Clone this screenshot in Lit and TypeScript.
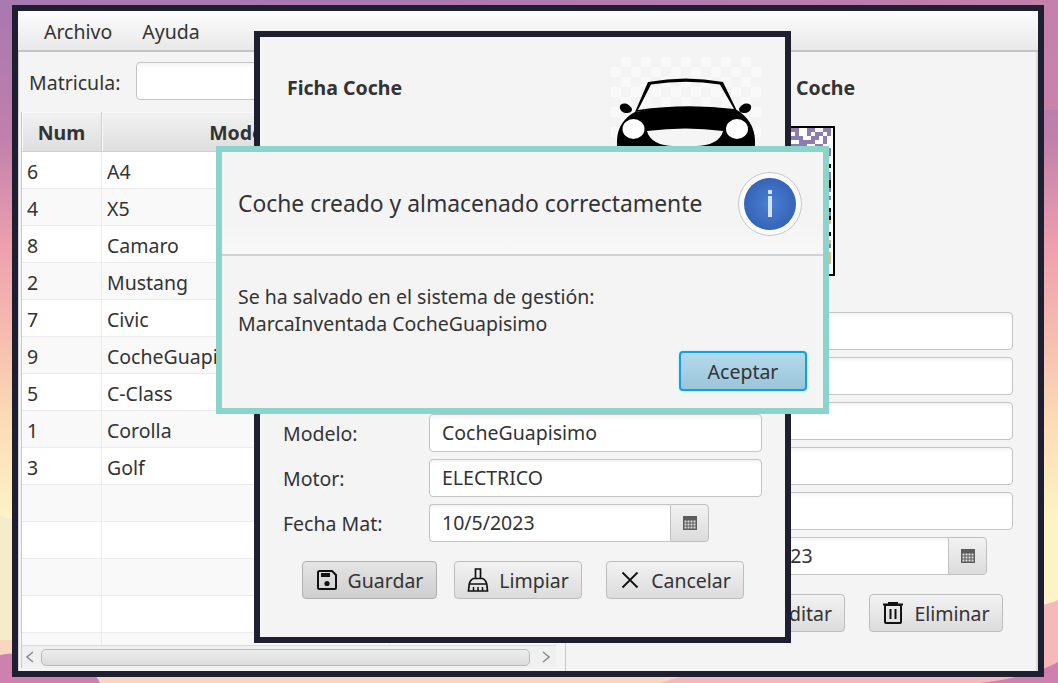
import { LitElement, html, css, svg } from 'lit';
import { customElement } from 'lit/decorators.js';

const coches = [
  ['6', 'A4'], ['4', 'X5'], ['8', 'Camaro'], ['2', 'Mustang'], ['7', 'Civic'],
  ['9', 'CocheGuapisimo'], ['5', 'C-Class'], ['1', 'Corolla'], ['3', 'Golf'],
  ['', ''], ['', ''], ['', ''], ['', ''], ['', ''],
];

// pixels of the qr code, always the same ones
function qrCells() {
  const cells = [];
  let seed = 71;
  for (let y = 0; y < 36; y++) {
    for (let x = 0; x < 36; x++) {
      seed = (seed * 1103515245 + 12345) & 0x7fffffff;
      const r = (seed >> 8) % 100;
      const edge = x > 33 || y < 6;
      let fill = '';
      if (y < 6) fill = r < 48 ? '#8d7cae' : '';
      else if (edge) fill = r < 25 ? '#8d7cae' : r < 45 ? '#000' : r < 60 ? '#f5b27c' : '';
      else fill = r < 50 ? '#8d7cae' : '';
      if (fill) cells.push(svg`<rect x=${x * 4} y=${y * 4} width="4" height="4" fill=${fill}></rect>`);
    }
  }
  return cells;
}

const iconGuardar = html`<svg class="ico" viewBox="0 0 22 22"><path d="M3.500 2h12.500l4 4v12.500a1.500 1.500 0 0 1-1.500 1.500h-15a1.500 1.500 0 0 1-1.500-1.500v-15a1.500 1.500 0 0 1 1.500-1.500z" fill="none" stroke="#111" stroke-width="2"/><rect x="5" y="4" width="9" height="4" fill="#111"/><circle cx="11" cy="14.500" r="2.600" fill="#111"/></svg>`;
const iconLimpiar = html`<svg class="ico tall" viewBox="0 0 22 24"><path d="M8.500 1h5v9.500h-5zM6.500 10.500h9c2.500 1 3.800 3 4.300 6l.7 6.500H1.500l.7-6.500c.5-3 1.800-5 4.300-6zM2.500 16h17" fill="none" stroke="#111" stroke-width="1.700"/><path d="M6.500 19v4M11 19v4M15.500 19v4" stroke="#111" stroke-width="1.500"/></svg>`;
const iconCancelar = html`<svg class="ico" viewBox="0 0 22 22"><path d="M3.500 3.500l15 15M18.500 3.500l-15 15" stroke="#111" stroke-width="1.800" fill="none"/></svg>`;
const iconEditar = html`<svg class="ico" viewBox="0 0 22 22"><path d="M3 15l11-11 4 4-11 11H3z" fill="none" stroke="#111" stroke-width="1.800"/></svg>`;
const iconEliminar = html`<svg class="ico" viewBox="0 0 22 22"><path d="M1 2.500h20M7 2.500V1h8v1.500" fill="none" stroke="#111" stroke-width="2"/><rect x="3" y="3" width="16" height="18" rx="1" fill="none" stroke="#111" stroke-width="2"/><path d="M8.500 7v10M13.500 7v10" stroke="#111" stroke-width="2"/></svg>`;
const iconCalendario = html`<svg class="cal" viewBox="0 0 14 14"><rect width="14" height="14" fill="#5c5c5c"/><path d="M1.500 4.500h2v2h-2zM4.500 4.500h2v2h-2zM7.500 4.500h2v2h-2zM10.500 4.500h2v2h-2zM1.500 7.500h2v2h-2zM4.500 7.500h2v2h-2zM7.500 7.500h2v2h-2zM10.500 7.500h2v2h-2zM1.500 10.500h2v2h-2zM4.500 10.500h2v2h-2zM7.500 10.500h2v2h-2zM10.500 10.500h2v2h-2z" fill="#dcdcdc"/></svg>`;

@customElement('app-root')
export class AppRoot extends LitElement {
  static styles = css`
    :host {
      display: block;
      font-family: 'Noto Sans', 'Open Sans', sans-serif;
      font-size: 19.5px;
      color: #333;
    }

    .desktop {
      position: relative;
      width: 1058px;
      height: 683px;
      overflow: hidden;
    }

    .wallpaper {
      position: absolute;
      left: 0;
      top: 0;
    }

    .win {
      position: absolute;
      box-sizing: border-box;
      background: #f4f4f4;
      border: 6px solid #1e2032;
    }

    .main { left: 12px; top: 5px; width: 1032px; height: 672px; }
    .form { left: 254px; top: 31px; width: 537px; height: 612px; }
    .dialog { left: 216px; top: 146px; width: 613px; height: 268px; border-color: #8bd4c9; }

    .menu {
      box-sizing: border-box;
      display: flex;
      gap: 30px;
      height: 41px;
      padding: 7px 0 0 26px;
      line-height: 27px;
      background: linear-gradient(#fdfdfd, #e8e8e8);
      border-bottom: 2px solid #c4c4c4;
    }

    .split {
      display: flex;
      height: 619px;
    }

    .left {
      box-sizing: border-box;
      width: 548px;
      padding: 10px 9px 0 2px;
      border-left: 1px solid #d4d4d4;
      border-right: 1px solid #c8c8c8;
    }

    .search {
      display: flex;
      align-items: center;
      gap: 16px;
      padding-left: 8px;
      margin-bottom: 12px;
    }

    .search-label { padding-top: 3px; }

    .input {
      box-sizing: border-box;
      height: 38px;
      padding: 0 12px;
      line-height: 36px;
      background: linear-gradient(#f4f4f4, #fff 5px);
      border: 1px solid #c4c4c4;
      border-radius: 4px;
    }

    .search .input { width: 340px; }

    .table {
      box-sizing: border-box;
      height: 556px;
      overflow: hidden;
      position: relative;
      background: #fff;
      border-left: 1px solid #c8c8c8;
    }

    .thead {
      display: grid;
      grid-template-columns: 80px 288px 1fr;
      grid-template-rows: 40px;
      height: 40px;
      font-weight: 700;
      text-align: center;
      line-height: 42px;
    }

    .thead span {
      box-sizing: border-box;
      height: 40px;
      background: linear-gradient(#f2f2f2, #dedede);
      border-right: 1px solid #cfcfcf;
      border-bottom: 1px solid #cfcfcf;
      box-shadow: inset 1px 1px 0 #fafafa;
    }

    .row {
      box-sizing: border-box;
      display: grid;
      grid-template-columns: 80px 288px 1fr;
      grid-template-rows: 36px;
      height: 37px;
      line-height: 40px;
      white-space: nowrap;
      border-bottom: 1px solid #ececec;
    }

    .row:nth-child(even) { background: #f9f9f9; }

    .row span {
      height: 36px;
      padding-left: 5px;
      border-right: 1px solid #ececec;
    }

    .scrollbar {
      position: absolute;
      left: 0;
      right: 0;
      bottom: 0;
      box-sizing: border-box;
      height: 23px;
      display: flex;
      align-items: center;
      background: #f0f0f0;
      border-top: 1px solid #dadada;
    }

    .scrollbar svg { width: 8px; height: 12px; flex: none; }
    .arrow-left { margin: 0 7px 0 4px; }
    .arrow-right { margin-left: 12px; }

    .thumb {
      box-sizing: border-box;
      width: 489px;
      height: 17px;
      background: linear-gradient(#ededed, #dcdcdc);
      border: 1px solid #b8b8b8;
      border-radius: 5px;
    }

    .right {
      flex: 1;
      box-sizing: border-box;
      padding: 24px 0 0 15px;
      border-right: 2px solid #dcdcdc;
    }

    .title {
      font-weight: 700;
      line-height: 24px;
    }

    .right .title { margin-left: 159px; }

    .qr {
      display: block;
      margin: 26px 0 36px 104px;
      border: 2px solid #000;
      background: #fff;
    }

    .field {
      display: flex;
      align-items: center;
      margin-bottom: 7px;
    }

    .label { flex: none; }
    .right .label { width: 126px; }
    .form .label { width: 146px; }
    .right .field .input { width: 306px; }
    .form .field .input { width: 333px; }

    .field .input.date {
      border-radius: 4px 0 0 4px;
      border-right: none;
    }

    .right .field .input.date { width: 241px; }
    .form .field .input.date { width: 241px; }

    .calbtn {
      box-sizing: border-box;
      width: 39px;
      height: 38px;
      display: flex;
      align-items: center;
      justify-content: center;
      background: linear-gradient(#f2f2f2, #dcdcdc);
      border: 1px solid #c0c0c0;
      border-radius: 0 4px 4px 0;
    }

    .cal { width: 14px; height: 14px; }

    .actions {
      display: flex;
      margin-top: 19px;
    }

    .right .actions { justify-content: flex-end; gap: 24px; margin-right: 33px; }
    .form .actions { margin-left: 19px; }

    .btn {
      box-sizing: border-box;
      display: flex;
      align-items: center;
      justify-content: center;
      gap: 10px;
      height: 38px;
      background: linear-gradient(#f2f2f2, #dcdcdc);
      border: 1px solid #bdbdbd;
      border-radius: 4px;
    }

    .btn.default { background: linear-gradient(#e4e4e4, #cfcfcf); border-color: #b0b0b0; }

    .ico { width: 22px; height: 22px; flex: none; }
    .ico.tall { height: 24px; }

    .w-guardar { width: 135px; }
    .w-limpiar { width: 128px; margin-left: 17px; }
    .w-cancelar { width: 138px; margin-left: 24px; }
    .w-editar { width: 165px; justify-content: flex-end; padding-right: 12px; }
    .w-eliminar { width: 134px; }

    .form-body { padding: 20px 23px 0; }

    .form-head {
      display: flex;
      justify-content: space-between;
      width: 478px;
      margin-bottom: 72px;
    }

    .form-head .title { margin: 19px 0 0 4px; }
    .car { display: block; }

    .dlg-head {
      box-sizing: border-box;
      display: flex;
      align-items: center;
      justify-content: space-between;
      height: 104px;
      padding: 2px 21px 0 16px;
      background: linear-gradient(#f4f4f4 70%, #f8f8f8);
      border-bottom: 2px solid #d2d2d2;
    }

    .dlg-title { font-size: 22.85px; padding-bottom: 2px; }

    .dlg-body {
      padding: 27px 16px 0;
      line-height: 27px;
    }

    .dlg-foot {
      display: flex;
      justify-content: flex-end;
      margin-top: 14px;
    }

    .accept {
      box-sizing: border-box;
      width: 128px;
      height: 40px;
      line-height: 38px;
      text-align: center;
      background: linear-gradient(#b4d9ec, #9cc5da);
      border: 2px solid #0ba3e0;
      border-radius: 4px;
      box-shadow: 0 0 2px #a9dcf2;
    }
  `;

  renderFields(fecha: string, valores: string[][]) {
    return html`
      ${valores.map(([label, value]) => html`
        <div class="field">
          <span class="label">${label}</span>
          <div class="input">${value}</div>
        </div>
      `)}
      <div class="field">
        <span class="label">Fecha Mat:</span>
        <div class="input date">${fecha}</div>
        <div class="calbtn">${iconCalendario}</div>
      </div>
    `;
  }

  renderWallpaper() {
    return html`
      <svg class="wallpaper" width="1058" height="683" viewBox="0 0 1058 683">
        <defs>
          <linearGradient id="sky" x1="0" y1="0" x2="0" y2="1">
            <stop offset="0" stop-color="#a878b0"></stop>
            <stop offset="0.2" stop-color="#c080ac"></stop>
            <stop offset="0.36" stop-color="#ee9fae"></stop>
            <stop offset="0.5" stop-color="#f6bfb0"></stop>
            <stop offset="0.62" stop-color="#fcdcb6"></stop>
            <stop offset="0.76" stop-color="#fdf3c6"></stop>
            <stop offset="1" stop-color="#fdf3c6"></stop>
          </linearGradient>
          <linearGradient id="tint" x1="0" y1="0" x2="1" y2="0">
            <stop offset="0" stop-color="#a878b0" stop-opacity="0"></stop>
            <stop offset="1" stop-color="#d084ac" stop-opacity="0.7"></stop>
          </linearGradient>
        </defs>
        <rect width="1058" height="683" fill="url(#sky)"></rect>
        <rect width="1058" height="110" fill="url(#tint)"></rect>
        <path d="M0 516C60 530 80 560 200 640L800 683H0z" fill="#f6eccb"></path>
        <path d="M0 640H300L690 670V683H0z" fill="#f8d6c0"></path>
        <path d="M0 655C40 648 90 660 100 683H0z" fill="#d080b0"></path>
        <path d="M660 683C760 650 900 660 1000 620C1030 606 1045 606 1058 600V683z" fill="#f6b8b8"></path>
        <path d="M980 683C1010 680 1040 672 1058 662V683z" fill="#d080b0"></path>
      </svg>
    `;
  }

  renderCar() {
    const tiles = [];
    for (let y = 0; y < 15; y++) {
      for (let x = 0; x < 15; x++) {
        if ((x + y) % 2) tiles.push(svg`<rect x=${x * 10} y=${y * 10} width="10" height="10" fill="#f9f9f9"></rect>`);
      }
    }
    return html`
      <svg class="car" width="150" height="150" viewBox="0 0 150 150">
        ${tiles}
        <path d="M37 25Q75 18 112 25L126 54Q75 48 24 55zM40 27.500L27 53Q75 46 123 52L109 27.500Q75 22 40 27.500z" fill="#000" fill-rule="evenodd"></path>
        <path d="M21 52C19 47 13 45 10 47.500C7 50 10 56 15 56C19 56 21 55 21 52zM128 52C130 47 136 45 139 47.500C142 50 139 56 134 56C130 56 128 55 128 52z" fill="#000"></path>
        <path d="M24 55Q75 46 126 53C136 59 144 70 144 84V130H6V84C6 70 14 60 24 55z" fill="#000"></path>
        <ellipse cx="22.500" cy="72" rx="11" ry="10" fill="#fff"></ellipse>
        <ellipse cx="126" cy="72" rx="11" ry="10" fill="#fff"></ellipse>
        <path d="M36 74Q75 69 112 74C110 84 98 89 85 89H62C50 89 38 84 36 74z" fill="#f5f5f5"></path>
      </svg>
    `;
  }

  render() {
    return html`
      <div class="desktop">
        ${this.renderWallpaper()}

        <section class="win main">
          <div class="menu"><span>Archivo</span><span>Ayuda</span></div>
          <div class="split">
            <div class="left">
              <div class="search">
                <span class="search-label">Matricula:</span>
                <div class="input"></div>
              </div>
              <div class="table">
                <div class="thead"><span>Num</span><span>Modelo</span><span></span></div>
                <div>
                  ${coches.map(([num, modelo]) => html`
                    <div class="row"><span>${num}</span><span>${modelo}</span><span></span></div>
                  `)}
                </div>
                <div class="scrollbar">
                  <svg class="arrow-left" viewBox="0 0 8 12"><path d="M7 1L1 6l6 5" fill="none" stroke="#8a8a8a" stroke-width="1.500"></path></svg>
                  <div class="thumb"></div>
                  <svg class="arrow-right" viewBox="0 0 8 12"><path d="M1 1l6 5-6 5" fill="none" stroke="#8a8a8a" stroke-width="1.500"></path></svg>
                </div>
              </div>
            </div>
            <div class="right">
              <div class="title">Ficha Coche</div>
              <svg class="qr" width="146" height="146" viewBox="0 0 146 146">${qrCells()}</svg>
              ${this.renderFields('10/5/2023', [['', ''], ['', ''], ['', ''], ['', ''], ['', '']])}
              <div class="actions">
                <div class="btn w-editar">${iconEditar}<span>Editar</span></div>
                <div class="btn w-eliminar">${iconEliminar}<span>Eliminar</span></div>
              </div>
            </div>
          </div>
        </section>

        <section class="win form">
          <div class="form-body">
            <div class="form-head">
              <div class="title">Ficha Coche</div>
              ${this.renderCar()}
            </div>
            ${this.renderFields('10/5/2023', [['', ''], ['', ''], ['', ''], ['Modelo:', 'CocheGuapisimo'], ['Motor:', 'ELECTRICO']])}
            <div class="actions">
              <div class="btn default w-guardar">${iconGuardar}<span>Guardar</span></div>
              <div class="btn w-limpiar">${iconLimpiar}<span>Limpiar</span></div>
              <div class="btn w-cancelar">${iconCancelar}<span>Cancelar</span></div>
            </div>
          </div>
        </section>

        <section class="win dialog">
          <div class="dlg-head">
            <span class="dlg-title">Coche creado y almacenado correctamente</span>
            <svg width="64" height="64" viewBox="0 0 64 64">
              <defs>
                <radialGradient id="blue">
                  <stop offset="0" stop-color="#4b80d2"></stop>
                  <stop offset="1" stop-color="#3564b8"></stop>
                </radialGradient>
              </defs>
              <circle cx="32" cy="32" r="31.500" fill="#fbfbfb" stroke="#c8c8c8"></circle>
              <circle cx="32" cy="32" r="26" fill="url(#blue)"></circle>
              <rect x="30" y="18" width="4" height="4" fill="#d5e3f6"></rect>
              <rect x="30" y="24" width="4" height="21" fill="#d5e3f6"></rect>
            </svg>
          </div>
          <div class="dlg-body">
            <div>Se ha salvado en el sistema de gestión:<br />MarcaInventada CocheGuapisimo</div>
            <div class="dlg-foot"><div class="accept">Aceptar</div></div>
          </div>
        </section>
      </div>
    `;
  }
}
